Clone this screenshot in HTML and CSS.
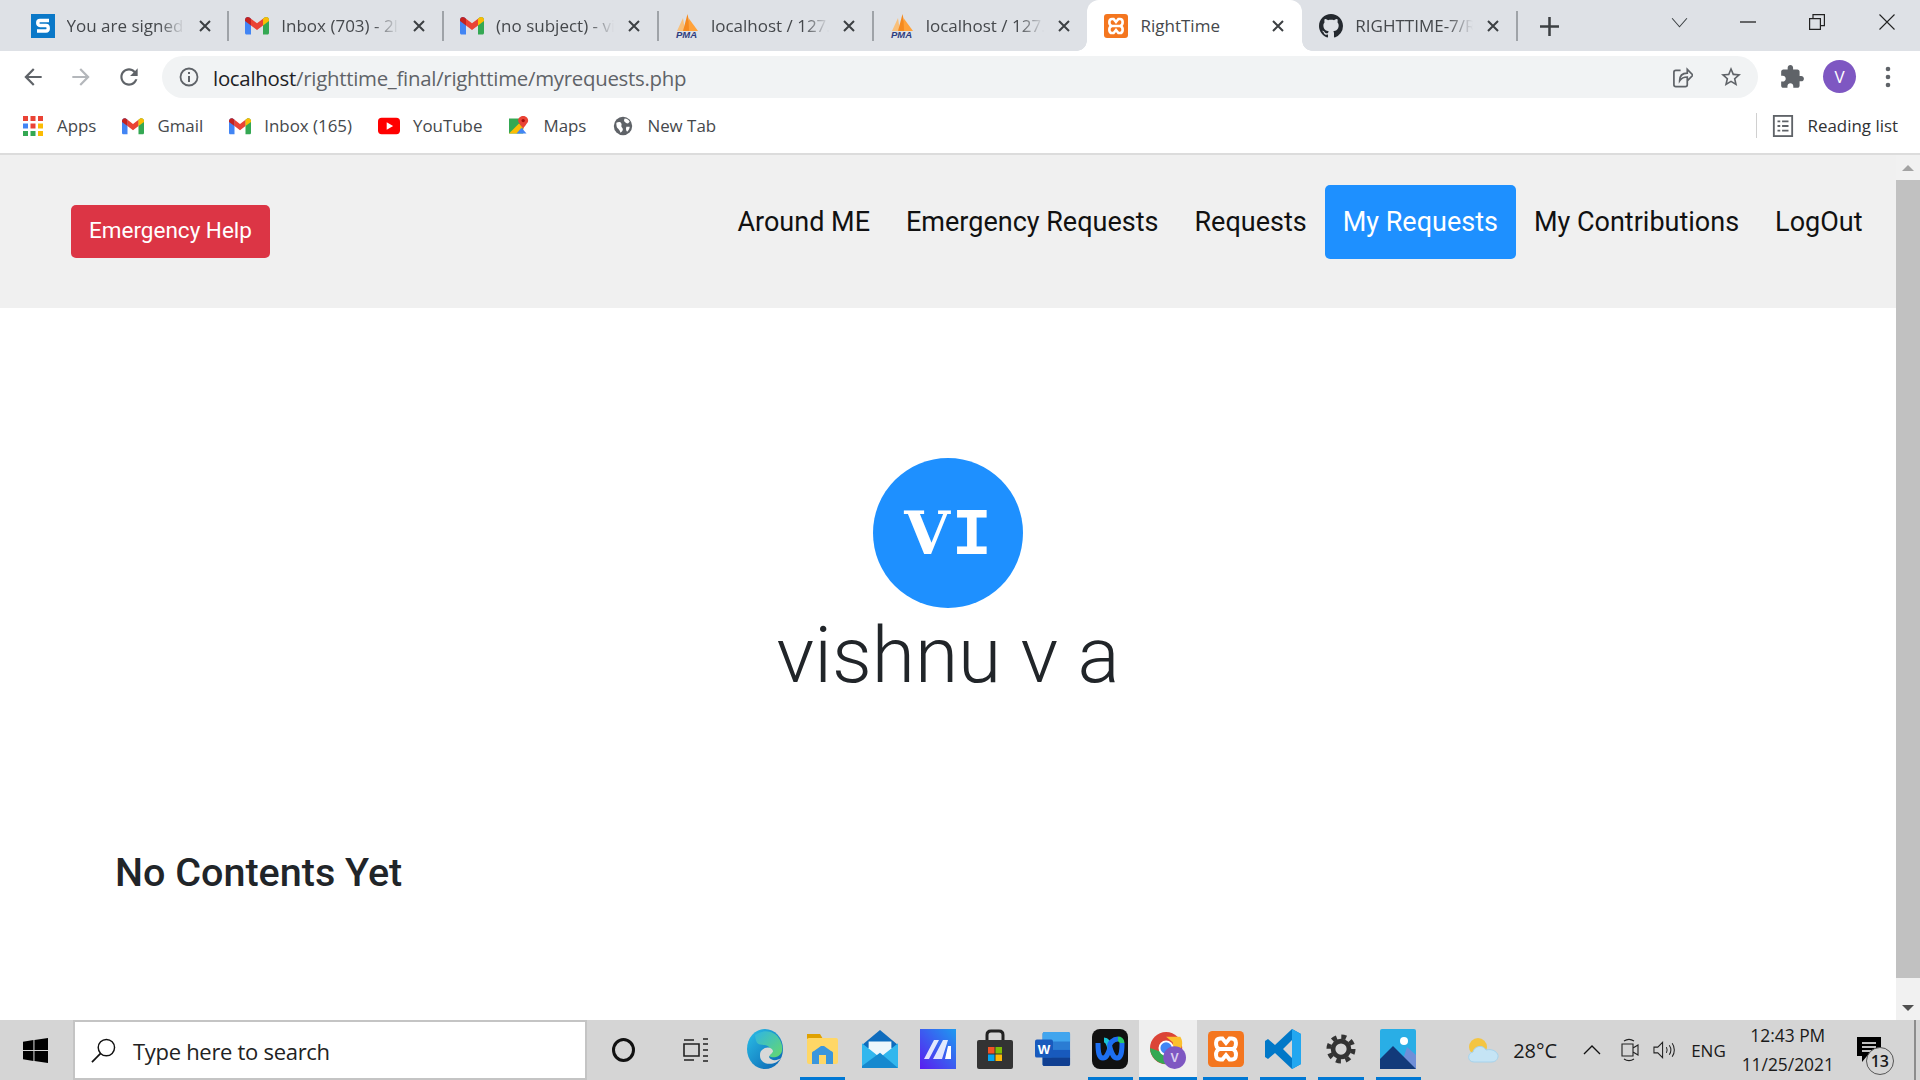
FILE: index.html
```
<!DOCTYPE html>
<html lang="en">
<head>
<meta charset="utf-8">
<title>RightTime</title>
<link rel="stylesheet" href="styles.css">
</head>
<body>
<svg class="defs" width="0" height="0" aria-hidden="true">
  <symbol id="gmail" viewBox="0 0 24 18">
    <path fill="#4285f4" d="M0 3.500C0 1 2.600-.4 4.500 1L6 2.200V18H1.500C.7 18 0 17.300 0 16.500z"/>
    <path fill="#34a853" d="M18 2.200 19.500 1C21.400-.4 24 1 24 3.500v13c0 .8-.7 1.500-1.500 1.500H18z"/>
    <path fill="#ea4335" d="M6 2.200 12 6.800l6-4.600v6.800L12 13.500 6 9z"/>
    <path fill="#fbbc04" d="M18 2.200 19.500 1C21.400-.4 24 1 24 3.500V4.600L18 9z"/>
    <path fill="#c5221f" d="M0 3.500C0 1 2.600-.4 4.500 1L6 2.200V9L0 4.600z"/>
  </symbol>
  <symbol id="pma" viewBox="0 0 24 24">
    <path fill="#f9c07a" d="M2 17 8 4l2 13z"/>
    <path fill="#f58a1f" d="M8 17 12.500 0 16 17z"/>
    <path fill="#ffa23a" d="M14 17 13.500 4 23 17z"/>
    <text x="1" y="24" class="pma-text">PMA</text>
  </symbol>
  <symbol id="xampp" viewBox="0 0 24 24">
    <rect width="24" height="24" rx="3" fill="#f4761f"/>
    <path fill="none" stroke="#fff" stroke-width="2.600" d="M8 5h1.600L12 8l2.400-3H16c3.300 0 3.600 5.500.5 7 3.100 1.500 2.800 7-.5 7h-1.600L12 16l-2.400 3H8c-3.300 0-3.600-5.500-.5-7-3.100-1.500-2.800-7 .5-7zM7.500 12h9"/>
  </symbol>
  <symbol id="github" viewBox="0 0 16 16">
    <path fill="#24292f" d="M8 0C3.580 0 0 3.580 0 8c0 3.540 2.290 6.530 5.470 7.590.4.070.55-.17.55-.38 0-.19-.01-.82-.01-1.490-2.010.37-2.530-.49-2.690-.94-.09-.23-.48-.94-.82-1.130-.28-.15-.68-.52-.01-.53.63-.01 1.080.58 1.230.82.72 1.210 1.870.87 2.330.66.070-.52.28-.87.51-1.070-1.780-.2-3.640-.89-3.640-3.950 0-.87.31-1.590.82-2.150-.08-.2-.36-1.020.08-2.120 0 0 .67-.21 2.200.82.64-.18 1.320-.27 2-.27.68 0 1.360.09 2 .27 1.530-1.040 2.200-.82 2.200-.82.44 1.100.16 1.920.08 2.120.51.56.82 1.270.82 2.150 0 3.070-1.870 3.750-3.650 3.950.29.25.54.73.54 1.480 0 1.070-.01 1.930-.01 2.200 0 .21.15.46.55.38A8.013 8.013 0 0016 8c0-4.420-3.580-8-8-8z"/>
  </symbol>
  <symbol id="close" viewBox="0 0 14 14">
    <path fill="none" stroke="#3c4043" stroke-width="2" d="M2 2l10 10M12 2 2 12"/>
  </symbol>
</svg>

<div class="screen">
  <header class="tabstrip">
    <div class="tab">
      <svg class="favicon" viewBox="0 0 24 24"><rect width="24" height="24" fill="#0a78c8"/><path fill="none" stroke="#fff" stroke-width="3.400" d="M18 6.500H9c-3 0-3 5 0 5h6c3 0 3 5.500 0 5.500H6"/></svg>
      <span class="tab-title">You are signed in</span>
      <svg class="tab-close"><use href="#close"/></svg>
      <span class="tab-sep"></span>
    </div>
    <div class="tab">
      <svg class="favicon gm"><use href="#gmail"/></svg>
      <span class="tab-title">Inbox (703) - 2lr</span>
      <svg class="tab-close"><use href="#close"/></svg>
      <span class="tab-sep"></span>
    </div>
    <div class="tab">
      <svg class="favicon gm"><use href="#gmail"/></svg>
      <span class="tab-title">(no subject) - vishnu</span>
      <svg class="tab-close"><use href="#close"/></svg>
      <span class="tab-sep"></span>
    </div>
    <div class="tab">
      <svg class="favicon"><use href="#pma"/></svg>
      <span class="tab-title">localhost / 127.0.0.1</span>
      <svg class="tab-close"><use href="#close"/></svg>
      <span class="tab-sep"></span>
    </div>
    <div class="tab">
      <svg class="favicon"><use href="#pma"/></svg>
      <span class="tab-title">localhost / 127.0.0.1</span>
      <svg class="tab-close"><use href="#close"/></svg>
      <span class="tab-sep hidden"></span>
    </div>
    <div class="tab active">
      <svg class="favicon"><use href="#xampp"/></svg>
      <span class="tab-title">RightTime</span>
      <svg class="tab-close"><use href="#close"/></svg>
      <span class="tab-sep hidden"></span>
    </div>
    <div class="tab">
      <svg class="favicon"><use href="#github"/></svg>
      <span class="tab-title">RIGHTTIME-7/RightTime</span>
      <svg class="tab-close"><use href="#close"/></svg>
      <span class="tab-sep"></span>
    </div>
    <svg class="new-tab" viewBox="0 0 18 18"><path fill="none" stroke="#3c4043" stroke-width="2.400" d="M9 0v18M0 9h18"/></svg>
    <div class="window-controls">
      <svg class="wc wc-chevron" viewBox="0 0 16 10"><path fill="none" stroke="#3c4043" stroke-width="1" d="M1 1l7 8 7-8"/></svg>
      <svg class="wc wc-min" viewBox="0 0 16 16"><path stroke="#222" stroke-width="1.300" d="M0 8h16"/></svg>
      <svg class="wc wc-max" viewBox="0 0 16 16"><path fill="none" stroke="#222" stroke-width="1.200" d="M.6 4.600h10.800v10.800H.6zM4 4.600V.6h11.400v11H11.400"/></svg>
      <svg class="wc wc-x" viewBox="0 0 16 16"><path fill="none" stroke="#222" stroke-width="1.100" d="M.5.500l15 15M15.500.500l-15 15"/></svg>
    </div>
  </header>

  <div class="toolbar">
    <svg class="tool back" viewBox="0 0 24 24"><path fill="#5f6368" d="M20 11H7.830l5.590-5.590L12 4l-8 8 8 8 1.410-1.410L7.830 13H20v-2z"/></svg>
    <svg class="tool forward" viewBox="0 0 24 24"><path fill="#b4b7bb" d="M4 11h12.170l-5.590-5.590L12 4l8 8-8 8-1.410-1.410L16.170 13H4v-2z"/></svg>
    <svg class="tool reload" viewBox="0 0 24 24"><path fill="#5f6368" d="M17.650 6.350C16.200 4.900 14.210 4 12 4c-4.420 0-7.990 3.580-7.990 8s3.570 8 7.990 8c3.730 0 6.840-2.550 7.730-6h-2.080c-.82 2.330-3.040 4-5.650 4-3.310 0-6-2.690-6-6s2.690-6 6-6c1.660 0 3.140.69 4.220 1.780L13 11h7V4l-2.350 2.350z"/></svg>
    <div class="omnibox">
      <svg class="info" viewBox="0 0 20 20"><circle cx="10" cy="10" r="8.500" fill="none" stroke="#5f6368" stroke-width="1.800"/><path stroke="#5f6368" stroke-width="2" d="M10 9v6M10 5v2"/></svg>
      <span class="url"><span class="url-host">localhost</span>/righttime_final/righttime/myrequests.php</span>
      <svg class="share" viewBox="0 0 22 24"><path fill="none" stroke="#5f6368" stroke-width="1.800" d="M9 5H4C2.500 5 2 6 2 7v13c0 1.500 1 2 2 2h10c1.500 0 2-1 2-2v-4M8 16c0-5 3-8 8-8V4l6 6-6 6v-4c-3 0-6 1-8 4z"/></svg>
      <svg class="star" viewBox="0 0 24 24"><path fill="#5f6368" d="M22 9.240l-7.190-.62L12 2 9.190 8.630 2 9.240l5.460 4.730L5.820 21 12 17.270 18.180 21l-1.630-7.030L22 9.240zM12 15.400l-3.760 2.270 1-4.280-3.320-2.880 4.380-.38L12 6.100l1.710 4.040 4.380.38-3.320 2.880 1 4.280L12 15.400z"/></svg>
    </div>
    <svg class="tool puzzle" viewBox="0 0 24 24"><path fill="#5f6368" d="M20.500 11H19V7c0-1.100-.9-2-2-2h-4V3.500C13 2.120 11.880 1 10.500 1S8 2.120 8 3.500V5H4c-1.100 0-1.990.9-1.990 2v3.800H3.500c1.490 0 2.700 1.210 2.700 2.700s-1.210 2.700-2.700 2.700H2V20c0 1.100.9 2 2 2h3.800v-1.500c0-1.490 1.210-2.700 2.700-2.700 1.490 0 2.700 1.210 2.700 2.700V22H17c1.100 0 2-.9 2-2v-4h1.500c1.380 0 2.500-1.120 2.500-2.500S21.880 11 20.500 11z"/></svg>
    <span class="profile">V</span>
    <svg class="dots" viewBox="0 0 6 22"><circle cx="3" cy="3" r="2.300" fill="#5f6368"/><circle cx="3" cy="11" r="2.300" fill="#5f6368"/><circle cx="3" cy="19" r="2.300" fill="#5f6368"/></svg>
  </div>

  <nav class="bookmarks">
    <a class="bm">
      <svg class="bm-icon" viewBox="0 0 20 20">
        <path fill="#ea4335" d="M0 0h5v5H0zM7.500 0h5v5h-5zM15 0h5v5h-5z"/>
        <path fill="#4285f4" d="M0 7.500h5v5H0z"/><path fill="#ea4335" d="M7.500 7.500h5v5h-5z"/><path fill="#fbbc04" d="M15 7.500h5v5h-5z"/>
        <path fill="#34a853" d="M0 15h5v5H0zM7.500 15h5v5h-5z"/><path fill="#fbbc04" d="M15 15h5v5h-5z"/>
      </svg>Apps</a>
    <a class="bm"><svg class="bm-icon"><use href="#gmail"/></svg>Gmail</a>
    <a class="bm"><svg class="bm-icon"><use href="#gmail"/></svg>Inbox (165)</a>
    <a class="bm"><svg class="bm-icon" viewBox="0 0 24 18"><rect width="24" height="18" rx="4" fill="#f00"/><path fill="#fff" d="M9.500 5v8l7-4z"/></svg>YouTube</a>
    <a class="bm"><svg class="bm-icon" viewBox="0 0 24 24"><path fill="#34a853" d="M0 3h17v18H0z"/><path fill="#fbbc04" d="M0 21 12 9l5 5-7 7z"/><path fill="#4285f4" d="M9 21l6-7 6 7z"/><path fill="#ea4335" d="M17 0c4 0 6 3 6 5.500 0 3-4 6-6 10-2-4-6-7-6-10C11 3 13 0 17 0z"/><circle cx="17" cy="5.500" r="2" fill="#a50e0e"/></svg>Maps</a>
    <a class="bm"><svg class="bm-icon" viewBox="0 0 24 24"><circle cx="12" cy="12" r="11" fill="#5f6368"/><path fill="#fff" d="M4 8c3-1 5-1 6 1s-1 3 1 5 0 5-2 6c-1-3-2-4-3-5S4 13 4 8zM14 3c3 0 5 2 6 4l-2 2c-2 0-3-1-4-2s-1-2 0-4zM16 13h4c0 2-1 4-3 6-1-1-2-3-1-6z"/></svg>New Tab</a>
    <div class="reading">
      <svg class="bm-icon rl" viewBox="0 0 22 24"><rect x="1" y="1" width="20" height="22" fill="none" stroke="#5f6368" stroke-width="2"/><path stroke="#5f6368" stroke-width="2" d="M5 7h3M10 7h7M5 12h3M10 12h7M5 17h3M10 17h7"/></svg>Reading list
    </div>
  </nav>

  <div class="viewport">
    <main class="page">
      <div class="site-nav">
        <a class="btn-emergency">Emergency Help</a>
        <ul class="nav-list">
          <li class="nav-item">Around ME</li>
          <li class="nav-item">Emergency Requests</li>
          <li class="nav-item">Requests</li>
          <li class="nav-item current">My Requests</li>
          <li class="nav-item">My Contributions</li>
          <li class="nav-item">LogOut</li>
        </ul>
      </div>
      <section class="hero">
        <div class="avatar"><span class="initials"><span class="initial-v">V</span><span class="initial-i">I</span></span></div>
        <h1 class="name">vishnu v a</h1>
      </section>
      <h2 class="empty">No Contents Yet</h2>
    </main>
    <aside class="scrollbar">
      <span class="arrow up"></span>
      <span class="thumb"></span>
      <span class="arrow down"></span>
    </aside>
  </div>

  <footer class="taskbar">
    <svg class="start" viewBox="0 0 24 24"><path fill="#000" d="M0 3.500 10 2v9.500H0zM11 1.900 24 0v11.500H11zM0 12.500h10V22L0 20.500zM11 12.500h13V24l-13-1.900z"/></svg>
    <div class="search">
      <svg class="search-icon" viewBox="0 0 26 26"><circle cx="16" cy="10" r="8.500" fill="none" stroke="#111" stroke-width="1.500"/><path stroke="#111" stroke-width="1.800" d="M10 16 1 25"/></svg>
      <span class="search-text">Type here to search</span>
    </div>
    <span class="cortana"></span>
    <svg class="taskview" viewBox="0 0 26 24"><path fill="none" stroke="#222" stroke-width="1.600" d="M1 6h15v12H1zM1 2h10M1 22h10M20 1h5M20 23h5M20 6h5M20 12h5M20 18h5"/></svg>
    <div class="apps">
      <span class="app"><svg viewBox="0 0 36 40"><defs><linearGradient id="eg" x1="0" y1="0" x2="1" y2="1"><stop offset="0" stop-color="#2bc1e8"/><stop offset="1" stop-color="#0a5fb0"/></linearGradient><linearGradient id="eg2" x1="0" y1="0" x2="1" y2="1"><stop offset="0" stop-color="#2fb5e5"/><stop offset="1" stop-color="#67d96b"/></linearGradient></defs><ellipse cx="18" cy="20" rx="18" ry="20" fill="url(#eg)"/><path fill="url(#eg2)" d="M8 6c8-6 20-5 25 5 4 8 3 15-4 17-5 1-9-1-8-5 3-1 3-6-3-7-6-1-9 1-10-10z"/><path fill="#d8d8d8" d="M15 21c4-4 10-3 11 1 0 2-3 3-4 6 2 4 8 4 12 1-6 9-21 7-21-2 0-3 0-4 2-6z"/></svg></span>
      <span class="app on"><svg viewBox="0 0 36 36"><path fill="#e0a100" d="M3 3h13l3 5H3z"/><rect x="3" y="7" width="31" height="26" rx="2" fill="#ffd766"/><path fill="#3a96dd" d="M8 33V22c0-1 1-2 2-2h0l7-5h3l7 5c1 0 2 1 2 2v11h-7v-9h-7v9z"/></svg></span>
      <span class="app"><svg viewBox="0 0 38 40"><path fill="#0f6cbd" d="M19 0 37 15v4H1v-4z"/><path fill="#eef7fc" d="M7 12h24v8L19 30 7 20z"/><path fill="#32b7ee" d="M0 14l19 15 19-15v26H0z"/><path fill="#1689cf" d="M0 40h38L19 24 0 38z"/></svg></span>
      <span class="app"><svg viewBox="0 0 36 40"><defs><linearGradient id="mg" x1="1" y1="0" x2="0" y2="1"><stop offset="0" stop-color="#1d9bf0"/><stop offset="1" stop-color="#5a1cf0"/></linearGradient></defs><rect width="36" height="40" fill="url(#mg)"/><path fill="#fff" opacity=".85" d="M4 30 14 11h5L9 30zM13 30 23 11h5l-6 19z"/><path fill="#fff" d="M25 30l3-13h3v13z"/></svg></span>
      <span class="app"><svg viewBox="0 0 36 40"><path fill="none" stroke="#222" stroke-width="3" d="M10 14V6c0-3 2-4 4-4h8c2 0 4 1 4 4v8"/><rect y="11" width="36" height="29" rx="2" fill="#333"/><path fill="#f35325" d="M11 18h6.500v6.500H11z"/><path fill="#81bc06" d="M18.500 18H25v6.500h-6.500z"/><path fill="#05a6f0" d="M11 25.500h6.500V32H11z"/><path fill="#ffba08" d="M18.500 25.500H25V32h-6.500z"/></svg></span>
      <span class="app"><svg viewBox="0 0 38 40"><rect x="8" y="2" width="29" height="36" rx="2" fill="#2b7cd3"/><path fill="#41a5ee" d="M8 4c0-1 1-2 2-2h25c1 0 2 1 2 2v8H8z"/><path fill="#185abd" d="M8 21h29v8H8z"/><path fill="#103f91" d="M8 29h29v7c0 1-1 2-2 2H10c-1 0-2-1-2-2z"/><rect y="10" width="19" height="19" rx="2" fill="#185abd"/><text x="9.500" y="25" class="word-w">W</text></svg></span>
      <span class="app on"><svg viewBox="0 0 36 40"><rect width="36" height="40" rx="8" fill="#111"/><path fill="none" stroke="#1d6ff2" stroke-width="5" d="M6 14c0 10 1 15 5 15s5-5 7-10"/><path fill="none" stroke="#18c4d8" stroke-width="5" d="M18 19c-2-6-3-8-6-8"/><path fill="none" stroke="#2ac96b" stroke-width="5" d="M30 14c0-3-2-4-4-4"/><path fill="none" stroke="#1d6ff2" stroke-width="5" d="M30 14c0 10-1 15-5 15s-5-5-7-10 4-9 8-9"/></svg></span>
      <span class="app on active-app"><svg viewBox="0 0 38 42"><circle cx="17" cy="20" r="17" fill="#db4437"/><path fill="#34a853" d="M0 20c0 9 8 17 17 17l8-14H9z"/><path fill="#fbc02d" d="M17 8h15c3 5 2 9 1 12L25 32 24 14z"/><circle cx="17" cy="20" r="8" fill="#fff"/><circle cx="17" cy="20" r="6" fill="#4285f4"/><circle cx="26" cy="30" r="12" fill="#7e57c2"/><text x="26" y="35" class="chrome-v">V</text></svg></span>
      <span class="app on"><svg viewBox="0 0 24 24"><use href="#xampp"/></svg></span>
      <span class="app on"><svg viewBox="0 0 36 40"><path fill="#0078c8" d="M27 0 36 5v30l-9 5L10 24l-7 6-3-2V12l3-2 7 6zM27 11l-9 9 9 9z"/><path fill="#22a7f0" d="M27 0 36 5v30l-9 5z"/></svg></span>
      <span class="app on"><svg class="gear" viewBox="0 0 32 32"><circle cx="16" cy="16" r="8.500" fill="none" stroke="#333" stroke-width="5"/><circle cx="16" cy="16" r="13" fill="none" stroke="#333" stroke-width="5" stroke-dasharray="5.200 5"/></svg></span>
      <span class="app on"><svg viewBox="0 0 36 40"><rect width="36" height="40" rx="2" fill="#29aee6"/><circle cx="24" cy="12" r="4" fill="#fff"/><path fill="#6f8fd8" d="M20 40 27 18l9 8v14z"/><path fill="#123a7a" d="M0 40V30l13-13 23 23z"/></svg></span>
    </div>
    <div class="tray">
      <svg class="weather" viewBox="0 0 32 26"><circle cx="10" cy="10" r="9" fill="#f4c542"/><path fill="#c5e4f5" stroke="#a6d3ec" d="M6 25c-7 0-7-9-1-10 1-6 10-8 13-2 7-2 13 3 12 7s-4 5-7 5z"/></svg>
      <span class="temp">28°C</span>
      <svg class="caret" viewBox="0 0 18 10"><path fill="none" stroke="#111" stroke-width="1.300" d="M1 9l8-8 8 8"/></svg>
      <svg class="meet" viewBox="0 0 18 24"><path fill="none" stroke="#222" stroke-width="1.100" d="M1 6h11v12H1zM12 10l5-3v10l-5-3M3 3c3-2 7-2 10 0M3 21c3 2 7 2 10 0"/></svg>
      <svg class="volume" viewBox="0 0 24 18"><path fill="none" stroke="#222" stroke-width="1.100" d="M1 6h4l5-5v16l-5-5H1zM14 6c1 2 1 4 0 6M17 4c2 3 2 7 0 10M20 2c3 4 3 10 0 14"/></svg>
      <span class="lang">ENG</span>
      <div class="clock"><span>12:43 PM</span><span>11/25/2021</span></div>
      <div class="notify">
        <svg class="notify-icon" viewBox="0 0 24 26"><path fill="#000" d="M0 0h24v19H10l-5 6v-6H0z"/><path stroke="#fff" stroke-width="1.300" d="M5 6h14M5 10h14M5 14h9"/></svg>
        <span class="badge">13</span>
      </div>
      <span class="tray-edge"></span>
    </div>
  </footer>
</div>
</body>
</html>
```

FILE: styles.css
```
* { box-sizing: border-box; }
html, body { margin: 0; height: 100%; overflow: hidden; }
body { font-family: "Open Sans", "Noto Sans", sans-serif; color: #202124; background: #fff; }
.defs { display: block; height: 0; }
.screen { display: flex; flex-direction: column; width: 1920px; height: 1080px; overflow: hidden; }

/* tab strip */
.tabstrip { display: flex; align-items: stretch; height: 51px; padding-left: 13.500px; background: #dee1e6; flex: none; }
.tab { position: relative; display: flex; align-items: center; width: 214.800px; padding-left: 17px; flex: none; }
.tab.active { background: #fff; border-radius: 12px 12px 0 0; }
.tab.active::before, .tab.active::after { content: ""; position: absolute; bottom: 0; width: 10px; height: 10px; }
.tab.active::before { left: -10px; background: radial-gradient(circle at 0 0, #dee1e6 9.500px, #fff 10px); }
.tab.active::after { right: -10px; background: radial-gradient(circle at 100% 0, #dee1e6 9.500px, #fff 10px); }
.favicon { width: 24px; height: 24px; flex: none; }
.favicon.gm { height: 19px; }
.tab-title { width: 118px; margin-left: 12px; font-size: 17px; color: #45484c; white-space: nowrap; overflow: hidden; flex: none; -webkit-mask-image: linear-gradient(90deg, #000 78%, transparent 100%); mask-image: linear-gradient(90deg, #000 78%, transparent 100%); }
.active .tab-title { -webkit-mask-image: none; mask-image: none; }
.tab-close { width: 14px; height: 14px; margin-left: 13px; flex: none; }
.tab-sep { width: 2px; height: 30px; margin-left: auto; margin-right: -1px; background: #9fa3a8; flex: none; }
.tab-sep.hidden { background: transparent; }
.pma-text { font: italic 700 9.500px "Liberation Sans", sans-serif; fill: #2f3c7e; }
.new-tab { width: 19px; height: 19px; margin: 17px 0 0 23px; flex: none; }
.window-controls { display: flex; align-items: flex-start; margin-left: 112px; flex: none; }
.wc { display: block; flex: none; }
.wc-chevron { width: 17px; height: 11px; margin-top: 17px; }
.wc-min { width: 16px; height: 16px; margin: 14px 0 0 52px; }
.wc-max { width: 16px; height: 16px; margin: 14px 0 0 53px; }
.wc-x { width: 16px; height: 16px; margin: 14px 0 0 54px; }

/* toolbar */
.toolbar { display: flex; align-items: center; height: 51px; padding-left: 20px; background: #fff; flex: none; }
.tool { width: 26px; height: 26px; flex: none; }
.forward { margin-left: 22px; }
.reload { margin-left: 22px; }
.omnibox { display: flex; align-items: center; width: 1596px; height: 42px; margin: 0 0 0 20px; padding: 0 0 0 17px; border-radius: 21px; background: #f1f3f4; flex: none; }
.info { width: 20px; height: 20px; flex: none; }
.url { margin-left: 14px; padding-top: 2px; font-size: 20.400px; letter-spacing: -.27px; color: #5f6368; white-space: nowrap; }
.url-host { color: #202124; }
.share { width: 21px; height: 24px; margin-left: auto; flex: none; }
.star { width: 24px; height: 24px; margin: 0 15px 0 26px; flex: none; }
.puzzle { margin-left: 21px; }
.profile { display: flex; align-items: center; justify-content: center; width: 33px; height: 33px; margin-left: 18px; border-radius: 50%; background: #7e57c2; color: #fff; font-size: 17px; flex: none; }
.dots { width: 6px; height: 22px; margin-left: 29px; flex: none; }

/* bookmarks */
.bookmarks { display: flex; align-items: center; height: 53px; padding: 0 0 4px 22px; gap: 26px; background: #fff; border-bottom: 2px solid #dcdcdc; flex: none; font-size: 16.900px; color: #45484c; }
.bm { display: flex; align-items: center; gap: 13px; white-space: nowrap; }
.bm-icon { width: 22px; height: 20px; flex: none; }
.reading { display: flex; align-items: center; gap: 14px; height: 25px; margin-left: auto; padding: 0 22px 0 15px; border-left: 1px solid #d0d0d0; color: #303134; white-space: nowrap; }
.rl { height: 22px; }

/* page */
.viewport { display: flex; flex: 1 1 auto; min-height: 0; font-family: Roboto, sans-serif; color: #212529; }
.page { flex: 1 1 auto; min-width: 0; background: #fff; }
.site-nav { display: flex; align-items: flex-start; height: 153px; padding: 30px 15.500px 0 71px; background: #f0f0f0; }
.btn-emergency { margin-top: 20px; padding: 0 18px; height: 53px; line-height: 51px; border-radius: 5px; background: #dc3545; color: #fff; font-size: 22.500px; white-space: nowrap; }
.nav-list { display: flex; margin: 0 0 0 auto; padding: 0; list-style: none; }
.nav-item { display: flex; align-items: center; height: 74px; padding: 0 18px; border-radius: 5px; font-size: 27px; color: #111; white-space: nowrap; }
.nav-item.current { background: #1e90ff; color: #fff; }
.hero { display: flex; flex-direction: column; align-items: center; padding-top: 150px; }
.avatar { display: flex; align-items: center; justify-content: center; width: 150px; height: 150px; border-radius: 50%; background: #1e90ff; color: #fff; }
.initials { padding-top: 7px; font-weight: 700; line-height: 1; white-space: nowrap; }
.initial-v { font-family: "DejaVu Serif", serif; font-size: 59px; }
.initial-i { margin-left: 2px; font-family: "Liberation Mono", monospace; font-size: 66px; }
.name { margin: 0; font-size: 78.600px; font-weight: 300; line-height: 94px; color: #212529; }
.empty { margin: 147px 0 0; padding-left: 115px; font-size: 39.500px; font-weight: 500; line-height: 47px; color: #212529; }

/* scrollbar */
.scrollbar { display: flex; flex-direction: column; align-items: center; width: 24px; background: #f1f1f1; flex: none; }
.arrow { width: 0; height: 0; border-left: 6px solid transparent; border-right: 6px solid transparent; flex: none; }
.arrow.up { margin-top: 10px; border-bottom: 6px solid #a3a3a3; }
.arrow.down { margin: auto 0 9px; border-top: 6px solid #505050; }
.thumb { width: 100%; height: 798px; margin-top: 9px; background: #c1c1c1; flex: none; }

/* taskbar */
.taskbar { display: flex; align-items: center; height: 60px; background: #d5d5d5; flex: none; }
.start { width: 25px; height: 25px; margin-left: 23px; flex: none; }
.search { display: flex; align-items: center; width: 514px; height: 60px; margin-left: 25px; padding-left: 16px; gap: 17px; background: #fff; border: 2px solid #c4c4c4; font-size: 22px; letter-spacing: -.3px; color: #222; flex: none; }
.search-icon { width: 25px; height: 25px; flex: none; }
.search-text { padding-top: 2px; }
.cortana { width: 23px; height: 24px; margin-left: 25px; border: 3px solid #111; border-radius: 50%; flex: none; }
.taskview { width: 26px; height: 24px; margin-left: 48px; flex: none; }
.apps { display: flex; height: 60px; margin-left: 27px; flex: none; }
.app { display: flex; align-items: center; justify-content: center; width: 57.600px; height: 60px; border-bottom: 3px solid transparent; background-clip: padding-box; flex: none; }
.app svg { width: 36px; height: 40px; }
.app.on { border-image: linear-gradient(90deg, transparent 12%, #0078d4 12%, #0078d4 88%, transparent 88%) 1; }
.app.active-app { background: #efefef; border-image: linear-gradient(#0078d4, #0078d4) 1; }
.app .gear { width: 30px; height: 30px; }
.word-w { font: 700 14px "Liberation Sans", sans-serif; fill: #fff; text-anchor: middle; }
.chrome-v { font: 700 13px "Liberation Sans", sans-serif; fill: #d9cdf0; text-anchor: middle; }
.tray { display: flex; align-items: center; height: 60px; margin-left: 41px; font-size: 19px; color: #1a1a1a; flex: 1 1 auto; min-width: 0; }
.weather { width: 32px; height: 26px; flex: none; }
.temp { margin-left: 13px; font-size: 20px; white-space: nowrap; }
.caret { width: 18px; height: 10px; margin-left: 26px; flex: none; }
.meet { width: 18px; height: 24px; margin-left: 20px; flex: none; }
.volume { width: 23px; height: 18px; margin-left: 14px; flex: none; }
.lang { margin-left: 15px; font-size: 17px; white-space: nowrap; }
.clock { display: flex; flex-direction: column; align-items: center; width: 100px; margin-left: 12px; font-size: 17.400px; line-height: 29px; white-space: nowrap; }
.notify { position: relative; width: 24px; height: 26px; margin-left: 19px; flex: none; }
.notify-icon { display: block; width: 24px; height: 26px; }
.badge { position: absolute; left: 9px; top: 10px; display: flex; align-items: center; justify-content: center; width: 28px; height: 28px; border: 1px solid #555; border-radius: 50%; background: #d5d5d5; font-size: 16px; font-weight: 600; }
.tray-edge { width: 2px; height: 60px; margin-left: auto; margin-right: 4px; background: #8c8c8c; flex: none; }
```
